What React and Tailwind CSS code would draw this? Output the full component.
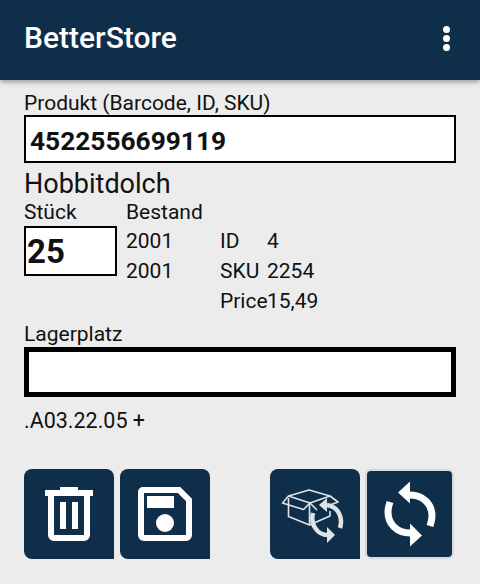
import React from "react";

const TrashIcon = () => (
  <svg width="90" height="90" viewBox="0 0 90 90" fill="none">
    <path d="M21 21h15v-3h18v3h15v6H21z" fill="#fff" />
    <path d="M27 27v39a3 3 0 0 0 3 3h30a3 3 0 0 0 3-3V27" stroke="#fff" strokeWidth="6" />
    <path d="M36 33h6v27h-6zM48 33h6v27h-6z" fill="#fff" />
  </svg>
);

const SaveIcon = () => (
  <svg width="90" height="90" viewBox="0 0 90 90" fill="none">
    <path d="M23 21h36l10 10v35a3 3 0 0 1-3 3H24a3 3 0 0 1-3-3V23a2 2 0 0 1 2-2z" stroke="#fff" strokeWidth="6" />
    <path d="M27 27h27v12H27z" fill="#fff" />
    <circle cx="45" cy="54" r="9" fill="#fff" />
  </svg>
);

const BoxSyncIcon = () => (
  <svg width="90" height="90" viewBox="0 0 90 90" fill="none">
    <g stroke="#dfe3e6" strokeWidth="1.6" strokeLinejoin="round">
      <path d="M18.5 27 39 21l21 6-20 7z" />
      <path d="M18.5 27 12.5 34l21 6.5L40 34" />
      <path d="M18.5 29v18.5L39.5 56l20.500-9V42" />
      <path d="M39.5 34v22" />
      <path d="M40 34l7 7M60 27l8 6-8 3" />
    </g>
    <path d="M70 59c3-10-1-21-13-23" stroke="#dfe3e6" strokeWidth="4.5" />
    <path d="M49 36l8-7v14z" fill="#dfe3e6" />
    <path d="M43 44c-3 11 4 22 15 22" stroke="#dfe3e6" strokeWidth="4.5" />
    <path d="M65 66l-8-8v16z" fill="#dfe3e6" />
  </svg>
);

const SyncIcon = () => (
  <svg width="85" height="86" viewBox="2 2 85 86" fill="none">
    <path d="M45 26c13 0 22 9 22 21 0 4-1 7-2 10" stroke="#fff" strokeWidth="7" />
    <path d="M33 23.500 45 12.500v22z" fill="#fff" />
    <path d="M45 64c-13 0-22-9-22-21 0-4 1-7 2-10" stroke="#fff" strokeWidth="7" />
    <path d="M57 66.500 45 54.500v23z" fill="#fff" />
  </svg>
);

export default function App() {
  return (
    <div className="h-[584px] w-[480px] overflow-hidden bg-[#ececec] text-[21px] leading-[24px] text-[#111] font-['Roboto',sans-serif]">
      {/* App bar */}
      <header className="flex h-20 items-center justify-between bg-[#0f2e49] pb-1 pl-6 pr-[30px] text-white shadow-[0_2px_5px_rgba(0,0,0,0.35)]">
        <h1 className="text-[30px] font-medium">BetterStore</h1>
        <div className="flex flex-col gap-[2px]">
          <span className="size-[7px] rounded-full bg-white" />
          <span className="size-[7px] rounded-full bg-white" />
          <span className="size-[7px] rounded-full bg-white" />
        </div>
      </header>

      <main className="px-6 pt-[11px]">
        <div>Produkt (Barcode, ID, SKU)</div>
        <div className="h-12 border-2 border-black bg-white pl-1 text-[26.3px] leading-[49px] font-bold">
          4522556699119
        </div>

        <div className="mt-[6px] text-[27px] leading-[30px]">Hobbitdolch</div>

        <div className="mt-[1px] flex">
          <div className="w-[102px]">
            <div>Stück</div>
            <div className="mt-[2px] h-[50px] w-[93px] border-2 border-black bg-white pl-[1px] text-[33px] leading-[48px] font-bold">
              25
            </div>
          </div>
          <div className="w-[94px]">
            <div>Bestand</div>
            <div className="mt-[2px] leading-[30px]">2001</div>
            <div className="leading-[30px]">2001</div>
          </div>
          <div className="mt-[26px] grid grid-cols-[47px_auto] leading-[30px]">
            <span>ID</span>
            <span>4</span>
            <span>SKU</span>
            <span>2254</span>
            <span>Price</span>
            <span>15,49</span>
          </div>
        </div>

        <div className="mt-[6px]">Lagerplatz</div>
        <div className="mt-[1px] h-[50px] border-[5px] border-black bg-white" />
        <div className="mt-3 text-[21.5px]">.A03.22.05 +</div>

        {/* Action buttons */}
        <div className="mt-[36px] flex">
          <button className="flex size-[90px] items-center justify-center rounded-lg rounded-br-none bg-[#0f2e49]">
            <TrashIcon />
          </button>
          <button className="ml-[6px] flex size-[90px] items-center justify-center rounded-lg rounded-br-none bg-[#0f2e49]">
            <SaveIcon />
          </button>
          <button className="ml-[60px] flex size-[90px] items-center justify-center rounded-lg rounded-br-none bg-[#0f2e49]">
            <BoxSyncIcon />
          </button>
          <button className="ml-[5px] flex h-[90px] w-[89px] items-center justify-center rounded-md border-2 border-[#d9d9d9] bg-[#0f2e49]">
            <SyncIcon />
          </button>
        </div>
      </main>
    </div>
  );
}
